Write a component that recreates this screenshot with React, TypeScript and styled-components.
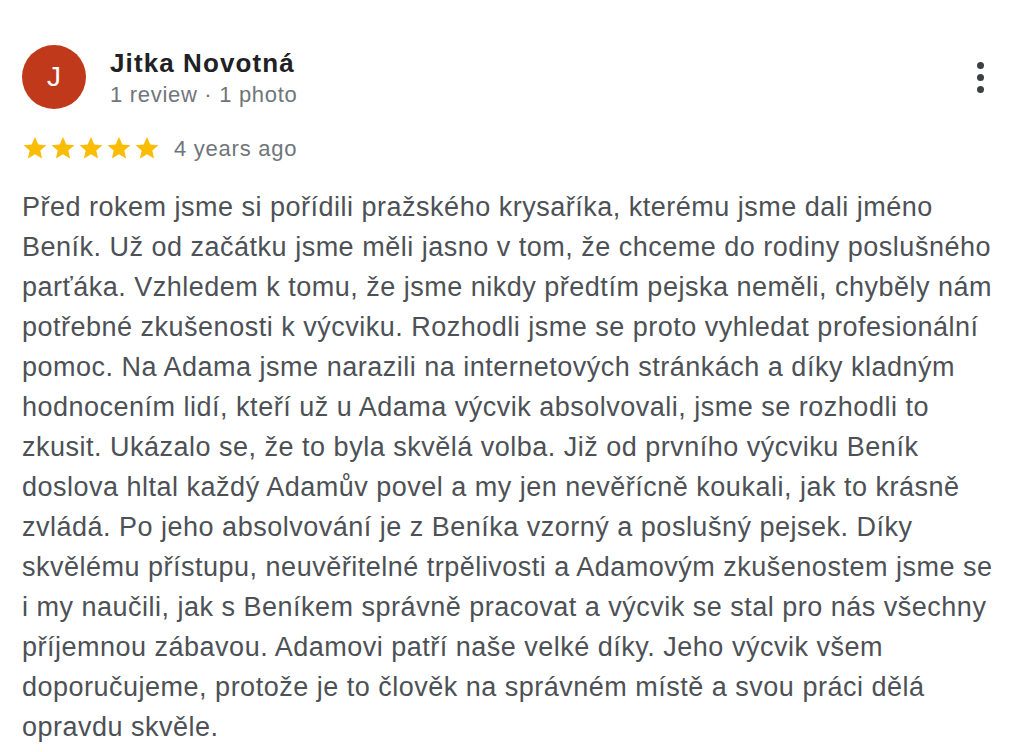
import React from "react";
import styled, { createGlobalStyle } from "styled-components";

const Global = createGlobalStyle`
  html, body { margin: 0; padding: 0; background: #fff; }
  body { font-family: "Liberation Sans", Arial, Helvetica, sans-serif; }
`;

const Card = styled.div`
  width: 1034px;
  box-sizing: border-box;
  padding: 45px 22px 0 22px;
`;

const Header = styled.div`
  display: flex;
  align-items: flex-start;
`;

const Avatar = styled.div`
  width: 64px;
  height: 64px;
  border-radius: 50%;
  background: #c0391b;
  color: #fff;
  display: flex;
  align-items: center;
  justify-content: center;
  font-size: 28px;
  flex-shrink: 0;
`;

const Info = styled.div`
  margin-left: 24px;
  flex: 1;
  padding-top: 2px;
`;

const Name = styled.div`
  font-size: 26px;
  font-weight: bold;
  letter-spacing: 1.1px;
  color: #202124;
  line-height: 32px;
`;

const Meta = styled.div`
  font-size: 22px;
  letter-spacing: 0.7px;
  color: #70757a;
  line-height: 32px;
`;

const MoreButton = styled.div`
  width: 20px;
  display: flex;
  flex-direction: column;
  align-items: center;
  gap: 5px;
  margin-top: 17px;
  margin-right: 22px;
`;

const Dot = styled.span`
  width: 7px;
  height: 7px;
  border-radius: 50%;
  background: #3c4043;
`;

const RatingRow = styled.div`
  display: flex;
  align-items: center;
  margin-top: 23px;
`;

const Stars = styled.div`
  display: flex;
  gap: 2px;
`;

const Ago = styled.span`
  margin-left: 14px;
  font-size: 22px;
  letter-spacing: 0.75px;
  color: #70757a;
  padding-top: 2px;
`;

const Body = styled.div`
  margin-top: 25px;
  font-size: 27px;
  letter-spacing: 0.5px;
  line-height: 40px;
  color: #4d5156;
`;

const Line = styled.div`
  white-space: nowrap;
`;

const Star = () => (
  <svg width="26" height="26" viewBox="0 0 24 24">
    <path
      fill="#fbbc04"
      d="M12 1.8l3.05 6.9 7.5.7-5.67 4.98 1.68 7.35L12 17.88l-6.56 3.85 1.68-7.35L1.45 9.4l7.5-.7z"
    />
  </svg>
);

const lines = [
  "Před rokem jsme si pořídili pražského krysaříka, kterému jsme dali jméno",
  "Beník. Už od začátku jsme měli jasno v tom, že chceme do rodiny poslušného",
  "parťáka. Vzhledem k tomu, že jsme nikdy předtím pejska neměli, chyběly nám",
  "potřebné zkušenosti k výcviku. Rozhodli jsme se proto vyhledat profesionální",
  "pomoc. Na Adama jsme narazili na internetových stránkách a díky kladným",
  "hodnocením lidí, kteří už u Adama výcvik absolvovali, jsme se rozhodli to",
  "zkusit. Ukázalo se, že to byla skvělá volba. Již od prvního výcviku Beník",
  "doslova hltal každý Adamův povel a my jen nevěřícně koukali, jak to krásně",
  "zvládá. Po jeho absolvování je z Beníka vzorný a poslušný pejsek. Díky",
  "skvělému přístupu, neuvěřitelné trpělivosti a Adamovým zkušenostem jsme se",
  "i my naučili, jak s Beníkem správně pracovat a výcvik se stal pro nás všechny",
  "příjemnou zábavou. Adamovi patří naše velké díky. Jeho výcvik všem",
  "doporučujeme, protože je to člověk na správném místě a svou práci dělá",
  "opravdu skvěle.",
];

export default function App() {
  return (
    <>
      <Global />
      <Card>
        <Header>
          <Avatar>J</Avatar>
          <Info>
            <Name>Jitka Novotná</Name>
            <Meta>1 review · 1 photo</Meta>
          </Info>
          <MoreButton>
            <Dot />
            <Dot />
            <Dot />
          </MoreButton>
        </Header>
        <RatingRow>
          <Stars>
            <Star />
            <Star />
            <Star />
            <Star />
            <Star />
          </Stars>
          <Ago>4 years ago</Ago>
        </RatingRow>
        <Body>
          {lines.map((l, i) => (
            <Line key={i}>{l}</Line>
          ))}
        </Body>
      </Card>
    </>
  );
}
